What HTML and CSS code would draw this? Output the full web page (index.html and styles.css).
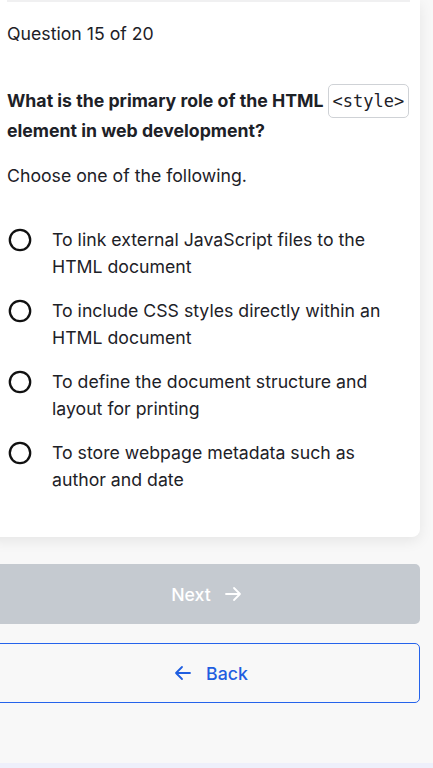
FILE: index.html
```html
<!DOCTYPE html>
<html lang="en">
<head>
<meta charset="utf-8">
<title>Quiz</title>
<link rel="stylesheet" href="styles.css">
</head>
<body>
<main class="page">
  <section class="card">
    <div class="divider"></div>
    <p class="counter">Question 15 of 20</p>
    <h1 class="question">What is the primary role of the HTML <code class="code">&lt;style&gt;</code> element in web development?</h1>
    <p class="hint">Choose one of the following.</p>
    <ul class="options">
      <li class="option">
        <svg class="radio" viewBox="0 0 24 24" width="24" height="24"><circle cx="12" cy="12" r="10.2" fill="none" stroke="#111" stroke-width="2.3"/></svg>
        <span class="label">To link external JavaScript files to the HTML document</span>
      </li>
      <li class="option">
        <svg class="radio" viewBox="0 0 24 24" width="24" height="24"><circle cx="12" cy="12" r="10.2" fill="none" stroke="#111" stroke-width="2.3"/></svg>
        <span class="label">To include CSS styles directly within an HTML document</span>
      </li>
      <li class="option">
        <svg class="radio" viewBox="0 0 24 24" width="24" height="24"><circle cx="12" cy="12" r="10.2" fill="none" stroke="#111" stroke-width="2.3"/></svg>
        <span class="label">To define the document structure and layout for printing</span>
      </li>
      <li class="option">
        <svg class="radio" viewBox="0 0 24 24" width="24" height="24"><circle cx="12" cy="12" r="10.2" fill="none" stroke="#111" stroke-width="2.3"/></svg>
        <span class="label">To store webpage metadata such as author and date</span>
      </li>
    </ul>
  </section>
  <button class="btn btn-next" type="button">Next
    <svg class="icon" viewBox="0 0 20 20" width="20" height="20"><path d="M3 10h14M11 4l6 6-6 6" fill="none" stroke="currentColor" stroke-width="1.8" stroke-linecap="round" stroke-linejoin="round"/></svg>
  </button>
  <button class="btn btn-back" type="button">
    <svg class="icon" viewBox="0 0 20 20" width="20" height="20"><path d="M17 10H3M9 4l-6 6 6 6" fill="none" stroke="currentColor" stroke-width="1.8" stroke-linecap="round" stroke-linejoin="round"/></svg>
    Back</button>
</main>
<footer class="bottom-bar"></footer>
</body>
</html>
```
FILE: styles.css
```css
html, body {
  margin: 0;
  padding: 0;
}
body {
  background: #f8f8f8;
  font-family: Inter, "Noto Sans", "Liberation Sans", sans-serif;
  color: #1d2127;
  overflow: hidden;
  height: 768px;
}
.page {
  margin-left: -12px;
  width: 432px;
  display: flex;
  flex-direction: column;
}
.card {
  background: #fff;
  border-radius: 0 0 8px 8px;
  box-shadow: 0 4px 14px rgba(0, 0, 0, 0.08);
  padding: 0 10px 44px 19px;
}
.divider {
  height: 2px;
  background: #f0f0f1;
}
.counter {
  margin: 20px 0 0;
  font-size: 17.7px;
  line-height: 24px;
}
.question {
  margin: 40px 0 0;
  font-size: 17.7px;
  font-weight: 700;
  line-height: 29px;
}
.code {
  font-family: "DejaVu Sans Mono", "Liberation Mono", monospace;
  font-weight: 400;
  font-size: 17px;
  padding: 6px 4px;
  border: 1px solid #cfd2d6;
  border-radius: 5px;
  background: #fff;
}
.hint {
  margin: 19px 0 0;
  font-size: 17.7px;
  line-height: 24px;
}
.options {
  list-style: none;
  margin: 38px 0 0;
  padding: 0;
  display: flex;
  flex-direction: column;
  gap: 17px;
}
.option {
  display: flex;
  align-items: flex-start;
  gap: 20px;
}
.radio {
  flex: none;
  margin-top: 2px;
  margin-left: 1px;
}
.label {
  font-size: 17.7px;
  line-height: 27px;
}
.btn {
  display: flex;
  align-items: center;
  justify-content: center;
  gap: 12px;
  height: 60px;
  width: 100%;
  border-radius: 5px;
  font-family: Inter, "Noto Sans", "Liberation Sans", sans-serif;
  font-size: 17.7px;
  font-weight: 500;
  cursor: pointer;
}
.btn-next {
  margin-top: 27px;
  padding: 0 0 0 6px;
  background: #c5cad0;
  border: none;
  color: #fff;
}
.btn-back {
  margin-top: 19px;
  padding: 0 0 0 13px;
  background: transparent;
  border: 1px solid #2563eb;
  color: #1f5ee0;
  gap: 13px;
}
.icon {
  flex: none;
}
.bottom-bar {
  margin-top: 60px;
  height: 10px;
  background: #eef0fb;
}
```
